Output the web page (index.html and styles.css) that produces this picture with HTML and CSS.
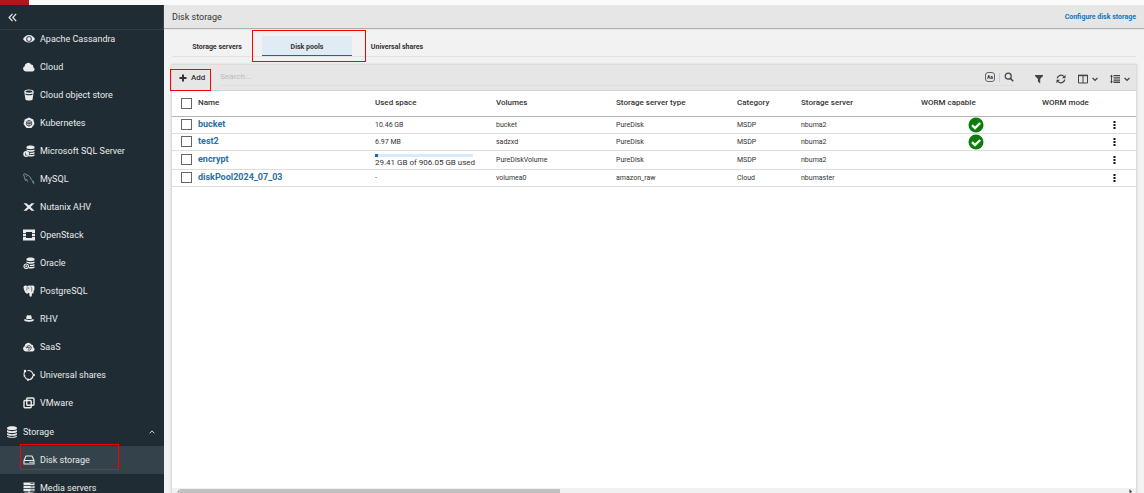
FILE: index.html
```html
<!DOCTYPE html>
<html lang="en">
<head>
<meta charset="utf-8">
<title>Disk storage</title>
<link rel="stylesheet" href="styles.css">
</head>
<body>
<div class="topbar"><div class="brand"></div></div>
<div class="shell">
  <aside class="sidebar">
    <div class="collapse-bar">
      <button class="collapse" aria-label="Collapse menu"><svg viewBox="0 0 8 8"><path d="M4 .8 1 4l3 3.200M7.300.8l-3 3.200 3 3.200" fill="none" stroke="currentColor" stroke-width="1.100"/></svg></button>
    </div>
    <nav class="nav">
      <a class="item" href="#"><svg class="icon" viewBox="0 0 24 24"><path fill-rule="evenodd" d="M12 4C6.500 4 2.500 7.500 0 12c2.500 4.500 6.500 7 12 7s9.500-2.500 12-7c-2.500-4.500-6.500-8-12-8zm0 2.500a5.500 5.500 0 1 1 0 11 5.500 5.500 0 0 1 0-11z"/><circle cx="12" cy="12" r="3.800"/></svg>Apache Cassandra</a>
      <a class="item" href="#"><svg class="icon" viewBox="0 0 24 24"><path d="M5.500 21A5.500 5.500 0 0 1 3.200 10.600 7 7 0 0 1 16.300 7.200a4.200 4.200 0 0 1 4 5.200A4.500 4.500 0 0 1 19.500 21z"/></svg>Cloud</a>
      <a class="item" href="#"><svg class="icon" viewBox="0 0 24 24"><path fill-rule="evenodd" d="M12 1C6.500 1 2.500 2.500 2.500 5L5 21.500C6 23.500 18 23.500 19 21.500L21.500 5c0-2.500-4-4-9.500-4zm0 2c4 0 7 1 7 2.200S16 7.500 12 7.500 5 6.400 5 5.200 8 3 12 3zM4.800 9c4 2 10.400 2 14.400 0l-.4 2.500c-4 1.500-9.600 1.500-13.600 0z"/></svg>Cloud object store</a>
      <a class="item" href="#"><svg class="icon" viewBox="0 0 24 24"><path d="m12 1 8.600 4.200L23 14l-6 8H7l-6-8 2.400-8.800z"/><g fill="none" stroke="#202c33" stroke-width="1.300"><circle cx="12" cy="12.500" r="5.500"/><path d="M12 6v13M6 10.500l12 4M6 14.500l12-4"/></g></svg>Kubernetes</a>
      <a class="item" href="#"><svg class="icon" viewBox="0 0 24 24"><path d="M7 4c0-4 16-4 16 0v2c0 3-16 3-16 0zM7 8.500c3 2.400 13 2.400 16 0v3c-1 2-7 2.500-11 1.800C10.500 12 9 11.500 7 11.500zM13.500 15.500c4 .3 8 0 9.500-1.500v2.500c-1 1.500-5 2-9 1.800zM13 20c4 .3 8.500 0 10-1.500V21c-1 2-9 2.500-12 1.500z"/><circle cx="6.500" cy="18" r="6"/><path d="M5 15.500v5h4" fill="none" stroke="#202c33" stroke-width="1.300"/></svg>Microsoft SQL Server</a>
      <a class="item" href="#"><svg class="icon dim" viewBox="0 0 24 24"><path fill="none" stroke="currentColor" stroke-width="1.500" d="M5 15C3 11 3 7 1.500 4.500 0 1 4.500 1 7 3.500c5 1 8 5 9.500 9.500.8 2 3 3 5.500 4.500l-3 .5 4 4.500M5 15l2-2.500 2.500 5M6 5.500l1 1.500"/></svg>MySQL</a>
      <a class="item" href="#"><svg class="icon" viewBox="0 0 24 24"><path d="M1 4.500h6L12 8.800l5-4.300h6L15.200 12 23 19.500h-6l-5-4.300-5 4.300H1L8.800 12z"/></svg>Nutanix AHV</a>
      <a class="item" href="#"><svg class="icon" viewBox="0 0 24 24"><path d="M0 1h24v7h-6V6H6v2H0zM0 9.500h6v5H0zM18 9.500h6v5h-6zM0 16h6v2h12v-2h6v7H0z"/></svg>OpenStack</a>
      <a class="item" href="#"><svg class="icon" viewBox="0 0 24 24"><path d="M7 4c0-4 16-4 16 0v2c0 3-16 3-16 0zM7 8.500c3 2.400 13 2.400 16 0v3c-1 2-7 2.500-11 1.800C10.500 12 9 11.500 7 11.500zM13.500 15.500c4 .3 8 0 9.500-1.500v2.500c-1 1.500-5 2-9 1.800zM13 20c4 .3 8.500 0 10-1.500V21c-1 2-9 2.500-12 1.500z"/><path fill="none" stroke="currentColor" stroke-width="2.400" d="M6.500 14a4.500 4.500 0 1 1 0 9 4.500 4.500 0 0 1 0-9z"/><circle cx="6.500" cy="18.500" r="1.800"/></svg>Oracle</a>
      <a class="item" href="#"><svg class="icon" viewBox="0 0 24 24"><path d="M2 2c3-2 6-1 7 0 3-1.500 5-1.500 7-.5C19 .5 22 1 23 4c.5 4-1 8-3 11l2.500 0c-1 2-3 2-4.500 1.500L17.500 22c-.5 2-4 2-4.500 0l-.5-6-2 0c-1 2-3 2-5 0C3 13 1 7 1 4.500z"/><path fill="none" stroke="#202c33" stroke-width="1.100" d="M9 3c-1.500 3-1 6-1.500 8M15.500 3c2.500 3 2.500 6 1.500 10M11.500 5v3"/></svg>PostgreSQL</a>
      <a class="item" href="#"><svg class="icon" viewBox="0 0 24 24"><path d="M6 11 7.500 5.500C8.500 4 10 5 12 5s3.500-1 4.500.5L18 11c-3 1.500-9 1.500-12 0zM2 13l3-.5c4 2 10 2 14 0l3 .5c1.500 6-21.500 6-20 0z"/></svg>RHV</a>
      <a class="item" href="#"><svg class="icon" viewBox="0 0 24 24"><path d="M5.500 21A5.500 5.500 0 0 1 3.200 10.600 7 7 0 0 1 16.300 7.200a4.200 4.200 0 0 1 4 5.200A4.500 4.500 0 0 1 19.500 21z"/><g fill="none" stroke="#202c33" stroke-width="1.600"><path d="M7.500 13a4.500 4.500 0 1 1 2 4.500M5.500 11.500 7.500 14l2.500-2"/><circle cx="12" cy="13.500" r="1.200"/></g></svg>SaaS</a>
      <a class="item" href="#"><svg class="icon" viewBox="0 0 24 24"><path fill="none" stroke="currentColor" stroke-width="2.200" d="M9 3.500c5-1.500 10 2 11 7M20 14c-1 4-4 7-8 7.500M9 21c-3-1-4-2.500-5-5M2.500 12.500C1.500 9 3 5.500 6 4.500"/><circle cx="4" cy="4" r="2.500"/><circle cx="21.500" cy="12" r="2.500"/><circle cx="10" cy="21.500" r="2.300"/><circle cx="3" cy="14" r="1.800"/></svg>Universal shares</a>
      <a class="item" href="#"><svg class="icon" viewBox="0 0 24 24"><g fill="none" stroke="currentColor" stroke-width="2.800"><rect x="7.500" y="2" width="14.500" height="14.500" rx="2"/><rect x="2" y="7" width="14.500" height="14.500" rx="2"/></g></svg>VMware</a>
      <button class="item group" aria-expanded="true"><svg class="icon" viewBox="0 0 24 24"><path d="M2 4c0-5 20-5 20 0v1c0 4-20 4-20 0zM2 8c4 3 16 3 20 0v3c0 4-20 4-20 0zM2 14c4 3 16 3 20 0v2.500c0 4-20 4-20 0zM2 19.500c4 3 16 3 20 0v1c0 4-20 4-20 0z"/></svg><span class="grow">Storage</span><svg class="caret" viewBox="0 0 6 6"><path d="M.6 4.300 3 1.900l2.400 2.400" fill="none" stroke="currentColor" stroke-width=".9"/></svg></button>
      <a class="item active" href="#"><svg class="icon" viewBox="0 0 24 24"><path fill="none" stroke="currentColor" stroke-width="2.200" stroke-linejoin="round" d="M2 13 6 4h12l4 9v7H2zM2 13h20"/><path d="M13 15.500h2.500V18H13zM17 15.500h2.500V18H17z"/></svg>Disk storage<span class="mark mark-nav"></span></a>
      <a class="item" href="#"><svg class="icon" viewBox="0 0 24 24"><path fill-rule="evenodd" d="M1 1h22v5H1zm14 1.700v1.500h6V2.700zM1 7.500h22v5H1zm14 1.700v1.500h6V9.200zM1 14h22v4.500H1zm14 1.500V17h6v-1.500zM11 18.500h2V21h8v2H3v-2h8z"/></svg>Media servers</a>
    </nav>
  </aside>
  <main class="main">
    <header class="page-head">
      <h1>Disk storage</h1>
      <a href="#">Configure disk storage</a>
    </header>
    <div class="content">
      <div class="tabs" role="tablist">
        <button class="tab" role="tab">Storage servers</button>
        <button class="tab selected" role="tab" aria-selected="true">Disk pools<span class="mark mark-tab"></span></button>
        <button class="tab" role="tab">Universal shares</button>
      </div>
      <section class="panel">
        <div class="toolbar">
          <button class="add"><svg viewBox="0 0 8 8"><path d="M3 .5h2V3h2.500v2H5v2.500H3V5H.5V3H3z"/></svg>Add<span class="mark mark-add"></span></button>
          <div class="search">
            <input type="text" placeholder="Search..." aria-label="Search">
            <button class="case" aria-label="Match case">Aa</button>
            <span class="bar"></span>
            <button class="tool" aria-label="Search"><svg class="tool-icon" viewBox="0 0 10 10"><circle cx="4.200" cy="4.200" r="3" fill="none" stroke="currentColor" stroke-width="1.300"/><path d="m6.300 6.300 2.900 2.900" stroke="currentColor" stroke-width="1.600"/></svg></button>
          </div>
          <div class="tools">
            <button class="tool" aria-label="Filter"><svg class="tool-icon" viewBox="0 0 10 10"><path d="M1 1h8v1L6.200 5v4.500L3.900 7.600V5L1 2z"/></svg></button>
            <button class="tool" aria-label="Refresh"><svg class="tool-icon" viewBox="0 0 10 10"><path d="M1.200 4.300A3.900 3.900 0 0 1 8 2.600M8.800 5.700A3.900 3.900 0 0 1 2 7.400" fill="none" stroke="currentColor" stroke-width="1.300"/><path d="M9.500.8v3.500H6zM.5 9.200V5.700H4z"/></svg></button>
            <button class="tool" aria-label="Columns"><svg class="tool-icon" viewBox="0 0 10 10"><path d="M.5 1.300h9v7.700h-9zM5 1.500V9" fill="none" stroke="currentColor"/><path d="M0 .8h10v1.400H0z"/></svg><svg class="chev" viewBox="0 0 6 6"><path d="m.6 2 2.400 2.400L5.400 2" fill="none" stroke="currentColor" stroke-width="1.300"/></svg></button>
            <button class="tool" aria-label="Row height"><svg class="tool-icon" viewBox="0 0 10 10"><path d="M3.500 1h6.500v1.300H3.500zM3.500 3.200h6.500v1.300H3.500zM3.500 5.400h6.500v1.300H3.500zM3.500 7.600h6.500v1.300H3.500zM1.500.6 3 2.800H2v4.400h1L1.500 9.400 0 7.200h1V2.800H0z"/></svg><svg class="chev" viewBox="0 0 6 6"><path d="m.6 2 2.400 2.400L5.400 2" fill="none" stroke="currentColor" stroke-width="1.300"/></svg></button>
          </div>
        </div>
        <div class="table-wrap">
          <table>
            <colgroup><col class="c-check"><col class="c-name"><col class="c-used"><col class="c-wide"><col class="c-used"><col class="c-cat"><col class="c-wide"><col class="c-used"><col><col class="c-menu"></colgroup>
            <thead>
              <tr><th><input type="checkbox" aria-label="Select all"></th><th>Name</th><th>Used space</th><th>Volumes</th><th>Storage server type</th><th>Category</th><th>Storage server</th><th>WORM capable</th><th>WORM mode</th><th></th></tr>
            </thead>
            <tbody>
              <tr><td><input type="checkbox" aria-label="Select bucket"></td><td><a href="#">bucket</a></td><td>10.46 GB</td><td>bucket</td><td>PureDisk</td><td>MSDP</td><td>nbuma2</td><td class="worm"><svg class="ok" viewBox="0 0 16 16"><circle cx="8" cy="8" r="7.500" fill="#0a7d0a"/><path d="m4 8.200 3 2.900L12.200 6" fill="none" stroke="#fff" stroke-width="2.400"/></svg></td><td></td><td><button class="more" aria-label="Actions"><svg viewBox="0 0 3 8"><path d="M.5 0h2v2h-2zM.5 3h2v2h-2zM.5 6h2v2h-2z"/></svg></button></td></tr>
              <tr><td><input type="checkbox" aria-label="Select test2"></td><td><a href="#">test2</a></td><td>6.97 MB</td><td>sadzxd</td><td>PureDisk</td><td>MSDP</td><td>nbuma2</td><td class="worm"><svg class="ok" viewBox="0 0 16 16"><circle cx="8" cy="8" r="7.500" fill="#0a7d0a"/><path d="m4 8.200 3 2.900L12.200 6" fill="none" stroke="#fff" stroke-width="2.400"/></svg></td><td></td><td><button class="more" aria-label="Actions"><svg viewBox="0 0 3 8"><path d="M.5 0h2v2h-2zM.5 3h2v2h-2zM.5 6h2v2h-2z"/></svg></button></td></tr>
              <tr><td><input type="checkbox" aria-label="Select encrypt"></td><td><a href="#">encrypt</a></td><td class="usage"><div class="meter"><div class="fill" style="width:3%"></div></div><div class="used">29.41 GB of 906.05 GB used</div></td><td>PureDiskVolume</td><td>PureDisk</td><td>MSDP</td><td>nbuma2</td><td></td><td></td><td><button class="more" aria-label="Actions"><svg viewBox="0 0 3 8"><path d="M.5 0h2v2h-2zM.5 3h2v2h-2zM.5 6h2v2h-2z"/></svg></button></td></tr>
              <tr><td><input type="checkbox" aria-label="Select diskPool2024_07_03"></td><td><a href="#">diskPool2024_07_03</a></td><td>-</td><td>volumea0</td><td>amazon_raw</td><td>Cloud</td><td>nbumaster</td><td></td><td></td><td><button class="more" aria-label="Actions"><svg viewBox="0 0 3 8"><path d="M.5 0h2v2h-2zM.5 3h2v2h-2zM.5 6h2v2h-2z"/></svg></button></td></tr>
            </tbody>
          </table>
        </div>
        <div class="scroll"><svg viewBox="0 0 4 5"><path d="M3.500 1v4L1 4z"/></svg><div class="track"><div class="thumb"></div></div><svg class="dark" viewBox="0 0 4 5"><path d="M.5 1v4L3 4z"/></svg></div>
      </section>
    </div>
  </main>
</div>
</body>
</html>
```

FILE: styles.css
```css
* { box-sizing: border-box; }
body {
  margin: 0;
  height: 100vh;
  overflow: hidden;
  display: flex;
  flex-direction: column;
  font: 9px/12px Roboto, "Liberation Sans", sans-serif;
  color: #333;
  background: #f2f2f2;
}
button { margin: 0; padding: 0; border: 0; background: none; font: inherit; color: inherit; }
a { text-decoration: none; }
svg { display: block; fill: currentColor; flex: none; }

.topbar { height: 5px; flex: none; background: #fafafa; }
.brand { width: 29px; height: 5px; background: #b3151c; }
.shell { flex: 1; display: flex; min-height: 0; }

.sidebar { width: 164px; flex: none; background: #202c33; color: #e9ebec; overflow: hidden; }
.collapse-bar { height: 25px; padding-left: 8px; display: flex; align-items: center; border-bottom: 1px solid #303c43; }
.collapse svg { width: 9px; height: 9px; }
.nav { margin-top: -5px; }
.item {
  position: relative;
  display: flex;
  align-items: center;
  gap: 5px;
  width: 100%;
  height: 28px;
  padding: 0 9px 0 23px;
  color: inherit;
  text-align: left;
}
.item.group { height: 29px; padding-left: 6px; }
.item.active { background: #33424b; }
.icon { width: 12px; height: 12px; }
.dim { opacity: .7; }
.grow { flex: 1; }
.caret { width: 6px; height: 6px; }

.mark { position: absolute; border: 1px solid #f00; pointer-events: none; }
.mark-nav { left: 20px; top: -2px; width: 99px; height: 26px; }
.mark-tab { inset: -6px -14px -7px -10px; }
.mark-add { inset: 4px -6px -1px -9px; }

.main { flex: 1; min-width: 0; display: flex; flex-direction: column; }
.page-head {
  height: 23px;
  flex: none;
  display: flex;
  align-items: center;
  justify-content: space-between;
  padding: 0 8px;
  background: #e6e6e6;
  box-shadow: 0 1px 1px #b0b0b0;
}
h1 { margin: 0; font-size: 9px; font-weight: 400; }
.page-head a { font-size: 7px; font-weight: 700; color: #0f76bd; }

.content { flex: 1; min-height: 0; display: flex; flex-direction: column; gap: 8px; padding: 8px 8px 0; }
.tabs { flex: none; display: flex; height: 21px; border-bottom: 1px solid #e2e2e2; }
.tab { position: relative; width: 90px; height: 20px; padding-top: 2px; font-size: 7px; font-weight: 700; border-bottom: 1px solid transparent; }
.tab.selected { background: #e1ebf4; border-bottom-color: #0f6ca8; }

.panel { flex: 1; min-height: 0; display: flex; flex-direction: column; background: #fff; box-shadow: 0 0 2px 1px #d2d2d2; }
.toolbar { height: 26px; flex: none; display: flex; background: #e6e6e6; border-bottom: 1px solid #cfcfcf; }
.add { position: relative; display: flex; align-items: center; gap: 4px; margin-left: 7px; padding-top: 1px; font-size: 8px; font-weight: 500; }
.add svg { width: 8px; height: 8px; }
.search { flex: 1; display: flex; align-items: center; gap: 4px; height: 20px; margin: 1px 20px 0 15px; padding-top: 3px; border-bottom: 1px solid #dedede; font-size: 8px; }
.search input { flex: 1; min-width: 0; padding: 0; border: 0; outline: 0; background: none; font: inherit; }
.search input::placeholder { color: #bbb; }
.case { width: 10px; height: 10px; border: 1px solid #666; border-radius: 3px; font-size: 5px; line-height: 7px; font-weight: 700; }
.bar { width: 1px; height: 9px; background: #ccc; }
.tools { display: flex; align-items: center; gap: 12px; padding: 2px 6px 0 0; }
.tool { display: flex; align-items: center; gap: 4px; color: #444; }
.tool-icon { width: 10px; height: 10px; }
.chev { width: 6px; height: 6px; }

.table-wrap { flex: 1; min-height: 0; overflow: hidden; }
table { width: 100%; table-layout: fixed; border-collapse: collapse; font-size: 7px; line-height: 10px; }
.c-check { width: 26px; }
.c-name { width: 177px; }
.c-used { width: 121px; }
.c-wide { width: 120px; }
.c-cat { width: 64px; }
.c-menu { width: 23px; }
th, td { height: 17px; padding: 0; text-align: left; white-space: nowrap; border-bottom: 1px solid #ddd; }
th { height: 25px; font-size: 8px; font-weight: 500; border-bottom-color: #b5b5b5; }
td a { font-size: 9px; font-weight: 700; color: #2a6fa3; }
input[type="checkbox"] { appearance: none; display: block; width: 11px; height: 11px; margin: 0 0 0 9px; border: 1px solid #666; background: #fff; }
.worm { padding-left: 47px; }
.ok { width: 16px; height: 16px; }
.more { display: block; }
.more svg { width: 3px; height: 8px; color: #111; }
.usage { padding-top: 3px; }
.meter { width: 98px; height: 3px; background: #d8ebfa; }
.fill { height: 3px; background: #0f6cb5; }
.used { font-size: 8px; line-height: 12px; }

.scroll { flex: none; height: 5px; display: flex; padding: 0 3px 0 4px; background: #f1f1f1; color: #aaa; }
.scroll svg { width: 4px; height: 5px; }
.scroll .dark { color: #333; }
.track { flex: 1; padding-top: 1px; }
.thumb { width: 40%; height: 4px; background: #c1c1c1; }
```
